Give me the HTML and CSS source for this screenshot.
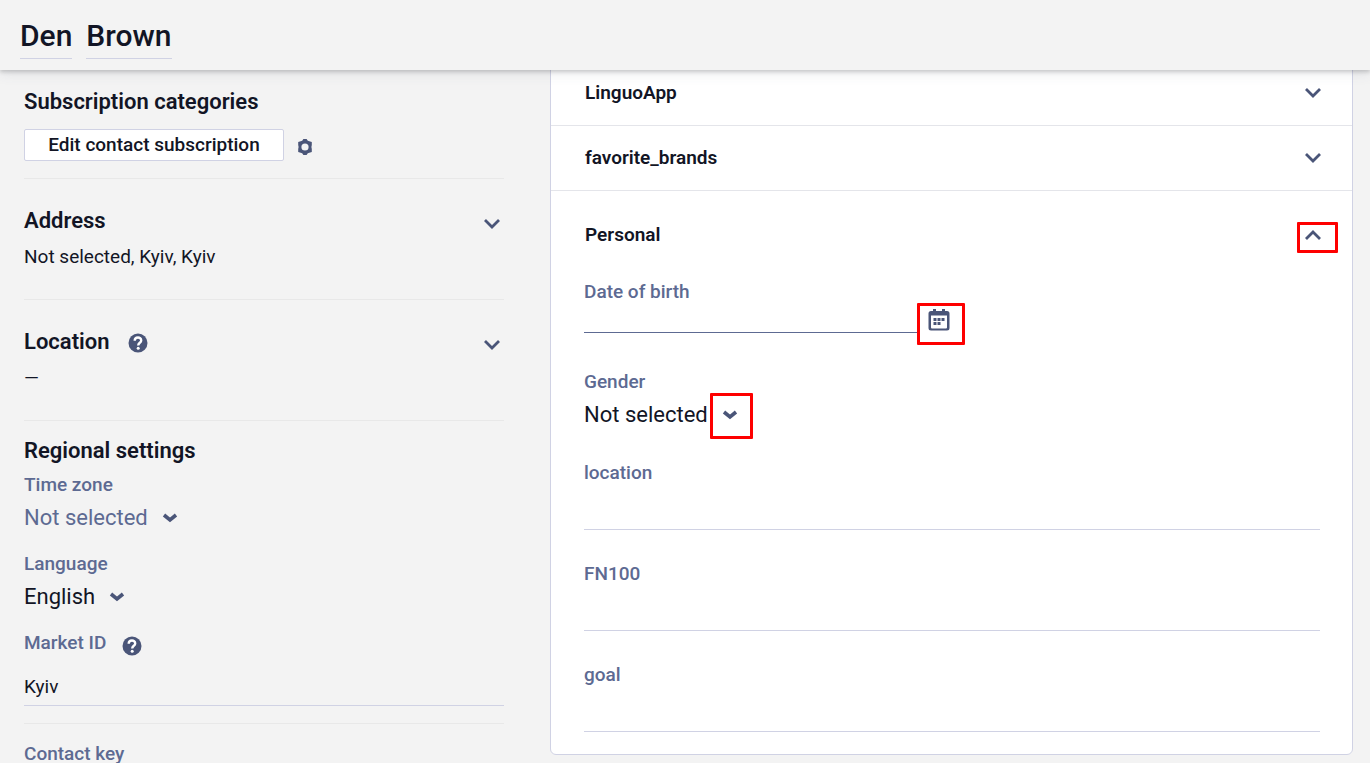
FILE: index.html
```html
<!DOCTYPE html>
<html lang="en">
  <head>
    <meta charset="UTF-8" />
    <meta name="viewport" content="width=device-width, initial-scale=1.0" />
    <title>Den Brown</title>
    <link rel="stylesheet" href="styles.css">
  </head>
  <body>
    <header class="header">
      <h1 class="name">
        <span class="name-part">Den</span>
        <span class="name-part">Brown</span>
      </h1>
    </header>
    <main class="main">
      <aside class="sidebar">
        <section class="section categories">
          <h2 class="title">Subscription categories</h2>
          <div class="row">
            <button class="edit-btn" type="button">Edit contact subscription</button>
            <button class="icon-btn" type="button" aria-label="Settings">
              <svg width="14" height="16" viewBox="0 0 14 16">
                <path fill-rule="evenodd" d="M5.4 0H8.6L9.8 1.8L13.8 3V6L13.4 8L13.8 10V13L9.8 14.2L8.6 16H5.4L4.2 14.2L0.2 13V10L0.6 8L0.2 6V3L4.2 1.8ZM7 4.400A3.600 3.600 0 1 0 7 11.600A3.600 3.600 0 1 0 7 4.400Z" />
              </svg>
            </button>
          </div>
        </section>
        <section class="section foldable">
          <div class="section-head">
            <h2 class="title">Address</h2>
            <button class="icon-btn" type="button" aria-label="Expand address">
              <svg width="18" height="12" viewBox="0 0 18 12">
                <path class="stroke" d="M2 2L9 9L16 2" />
              </svg>
            </button>
          </div>
          <p class="text">Not selected, Kyiv, Kyiv</p>
        </section>
        <section class="section foldable">
          <div class="section-head">
            <h2 class="title">Location</h2>
            <button class="icon-btn help" type="button" aria-label="Location help">
              <svg width="20" height="20" viewBox="0 0 20 20">
                <circle cx="10" cy="10" r="9.5" />
                <path class="mark" d="M6.7 7.8C6.7 3.5 13.2 3.5 13.2 7.4C13.2 9.8 10.2 9.7 10.2 12.4" />
                <circle class="dot" cx="10.2" cy="15.2" r="1.5" />
              </svg>
            </button>
            <button class="icon-btn" type="button" aria-label="Expand location">
              <svg width="18" height="12" viewBox="0 0 18 12">
                <path class="stroke" d="M2 2L9 9L16 2" />
              </svg>
            </button>
          </div>
          <p class="text">—</p>
        </section>
        <section class="section regional">
          <h2 class="title">Regional settings</h2>
          <div class="field">
            <label class="label" for="timezone">Time zone</label>
            <div class="select-wrap">
              <select class="select muted" id="timezone"><option>Not selected</option></select>
              <svg width="16" height="10" viewBox="0 0 16 10">
                <path class="stroke bold" d="M2 2L8 7L14 2" />
              </svg>
            </div>
          </div>
          <div class="field">
            <label class="label" for="language">Language</label>
            <div class="select-wrap">
              <select class="select" id="language"><option>English</option></select>
              <svg width="16" height="10" viewBox="0 0 16 10">
                <path class="stroke bold" d="M2 2L8 7L14 2" />
              </svg>
            </div>
          </div>
          <div class="field">
            <div class="label-row">
              <label class="label" for="market">Market ID</label>
              <button class="icon-btn" type="button" aria-label="Market ID help">
                <svg width="20" height="20" viewBox="0 0 20 20">
                  <circle cx="10" cy="10" r="9.5" />
                  <path class="mark" d="M6.7 7.8C6.7 3.5 13.2 3.5 13.2 7.4C13.2 9.8 10.2 9.7 10.2 12.4" />
                  <circle class="dot" cx="10.2" cy="15.2" r="1.5" />
                </svg>
              </button>
            </div>
            <input class="input market" id="market" type="text" value="Kyiv" />
          </div>
        </section>
        <section class="section contact">
          <label class="label" for="key">Contact key</label>
          <input class="input" id="key" type="text" />
        </section>
      </aside>
      <div class="card">
        <div class="card-row">
          <h3 class="card-title">LinguoApp</h3>
          <button class="icon-btn" type="button" aria-label="Expand LinguoApp">
            <svg width="18" height="12" viewBox="0 0 18 12">
              <path class="stroke" d="M2 2L9 9L16 2" />
            </svg>
          </button>
        </div>
        <div class="card-row">
          <h3 class="card-title">favorite_brands</h3>
          <button class="icon-btn" type="button" aria-label="Expand favorite_brands">
            <svg width="18" height="12" viewBox="0 0 18 12">
              <path class="stroke" d="M2 2L9 9L16 2" />
            </svg>
          </button>
        </div>
        <div class="personal">
          <div class="personal-head">
            <h3 class="card-title">Personal</h3>
            <div class="marked">
              <button class="icon-btn" type="button" aria-label="Collapse Personal">
                <svg width="18" height="12" viewBox="0 0 18 12">
                  <path class="stroke" d="M2 10L9 3L16 10" />
                </svg>
              </button>
              <span class="frame frame-fold"></span>
            </div>
          </div>
          <div class="personal-fields">
            <div class="field">
              <label class="label" for="birth">Date of birth</label>
              <div class="date-row">
                <input class="input date" id="birth" type="text" />
                <div class="marked">
                  <button class="icon-btn" type="button" aria-label="Open calendar">
                    <svg width="22" height="22" viewBox="0 0 22 22">
                      <path fill-rule="evenodd" d="M5 0H8V2H14V0H17V2H19Q21.500 2 21.500 4.500V19Q21.500 21.500 19 21.500H3Q0.500 21.500 0.500 19V4.500Q0.500 2 3 2H5ZM3 6.500V18.500Q3 19.500 4 19.500H18Q19 19.500 19 18.500V6.500Z" />
                      <path d="M5.500 9H8.500V12H5.500ZM9.500 9H12.500V12H9.500ZM13.500 9H16.500V12H13.500ZM5.500 13H8.500V16H5.500ZM9.500 13H12.500V16H9.500Z" />
                    </svg>
                  </button>
                  <span class="frame frame-date"></span>
                </div>
              </div>
            </div>
            <div class="field">
              <label class="label" for="gender">Gender</label>
              <div class="select-wrap">
                <select class="select" id="gender"><option>Not selected</option></select>
                <div class="marked">
                  <svg width="16" height="10" viewBox="0 0 16 10">
                    <path class="stroke bold" d="M2 2L8 7L14 2" />
                  </svg>
                  <span class="frame frame-gender"></span>
                </div>
              </div>
            </div>
            <div class="field">
              <label class="label" for="location">location</label>
              <input class="input" id="location" type="text" />
            </div>
            <div class="field">
              <label class="label" for="fn100">FN100</label>
              <input class="input" id="fn100" type="text" />
            </div>
            <div class="field">
              <label class="label" for="goal">goal</label>
              <input class="input" id="goal" type="text" />
            </div>
          </div>
        </div>
      </div>
    </main>
  </body>
</html>
```
FILE: styles.css
```css
* {
  box-sizing: border-box;
}
body {
  margin: 0;
  height: 100vh;
  display: flex;
  flex-direction: column;
  overflow: hidden;
  background: #f3f3f3;
  color: #121525;
  font-family: Roboto, "Liberation Sans", sans-serif;
  font-size: 19px;
  line-height: 24px;
}
h1,
h2,
h3,
p {
  margin: 0;
}
button,
input,
select {
  font: inherit;
  color: inherit;
}
svg {
  display: block;
  fill: #4a5578;
}

.header {
  position: relative;
  z-index: 1;
  flex-shrink: 0;
  padding: 15px 20px 11px;
  background: #f3f3f3;
  box-shadow: 0 2px 4px rgba(0, 0, 0, 0.18), 0 4px 12px rgba(74, 85, 120, 0.1);
}
.name {
  display: flex;
  gap: 14px;
  font-size: 30px;
  line-height: 42px;
  font-weight: 500;
}
.name-part {
  padding-bottom: 1px;
  border-bottom: 1px solid #d0d2e4;
}

.main {
  flex: 1;
  min-height: 0;
  display: grid;
  grid-template-columns: 480px 1fr;
  gap: 46px;
  align-items: start;
  padding: 0 17px 0 24px;
  overflow: hidden;
}

.section {
  border-bottom: 1px solid #e8e8e8;
}
.title {
  font-size: 22px;
  line-height: 28px;
  font-weight: 600;
}
.categories {
  padding: 18px 0 17px;
}
.row {
  display: flex;
  align-items: center;
  gap: 14px;
  margin-top: 13px;
}
.edit-btn {
  width: 260px;
  height: 32px;
  padding: 0;
  border: 1px solid #d0d2e4;
  border-radius: 2px;
  background: #fff;
  font-weight: 500;
}
.icon-btn {
  padding: 0;
  border: 0;
  background: none;
  cursor: pointer;
}
.row .icon-btn {
  padding-top: 4px;
}
.foldable {
  padding: 28px 0 30px;
}
.foldable .text {
  margin-top: 10px;
}
.section-head {
  display: flex;
  align-items: center;
  justify-content: space-between;
  padding-right: 3px;
}
.section-head .icon-btn {
  padding-top: 5px;
}
.section-head .help {
  margin: 0 auto 0 19px;
  padding-top: 2px;
}
.stroke {
  fill: none;
  stroke: #4a5578;
  stroke-width: 2.8;
}
.bold {
  stroke-width: 3.6;
}
.mark {
  fill: none;
  stroke: #fff;
  stroke-width: 2.4;
}
.dot {
  fill: #fff;
}

.regional {
  display: flex;
  flex-direction: column;
  gap: 20px;
  padding: 16px 0 17px;
}
.regional .title {
  margin-bottom: -12px;
}
.contact {
  padding-top: 18px;
}
.label {
  display: block;
  color: #5d6a92;
  font-weight: 500;
}
.label-row {
  display: flex;
  gap: 16px;
}
.label-row .icon-btn {
  padding-top: 5px;
}
.select-wrap {
  display: flex;
  align-items: center;
  gap: 14px;
  margin-top: 7px;
}
.select {
  appearance: none;
  field-sizing: content;
  height: 28px;
  padding: 0;
  border: 0;
  background: none;
  font-size: 22px;
  line-height: 28px;
}
.muted {
  color: #5d6a92;
}
.input {
  display: block;
  width: 100%;
  height: 45px;
  padding: 0;
  border: 0;
  border-bottom: 1px solid #d0d2e4;
  background: none;
  outline: none;
}
.market {
  height: 38px;
  margin-top: 12px;
}

/* right card, its first row is partly scrolled under the header */
.card {
  margin-top: -10px;
  border: 1px solid #d0d2e4;
  border-radius: 6px;
  background: #fff;
}
.card-row {
  display: flex;
  align-items: center;
  justify-content: space-between;
  height: 65px;
  padding: 0 30px 0 34px;
  border-bottom: 1px solid #e4e5ea;
}
.card-title {
  font-size: 19px;
  line-height: 24px;
  font-weight: 600;
}
.personal {
  padding: 32px 32px 22px 33px;
}
.personal-head {
  display: flex;
  align-items: center;
  justify-content: space-between;
  margin: 0 -2px 33px 1px;
}
.personal-fields {
  display: flex;
  flex-direction: column;
  gap: 32px;
}
.date-row {
  display: flex;
  gap: 10px;
  padding-bottom: 1px;
}
.date {
  width: 334px;
  height: 29px;
  border-color: #5d6a92;
}
.date-row .icon-btn {
  padding-top: 5px;
}

.marked {
  position: relative;
}
.frame {
  position: absolute;
  border: 3px solid #fe0000;
  border-radius: 1px;
  pointer-events: none;
}
.frame-fold {
  top: -1px;
  left: -7px;
  width: 41px;
  height: 31px;
}
.frame-date {
  top: -1px;
  left: -11px;
  width: 48px;
  height: 42px;
}
.frame-gender {
  top: -17px;
  left: -12px;
  width: 43px;
  height: 46px;
}
```
